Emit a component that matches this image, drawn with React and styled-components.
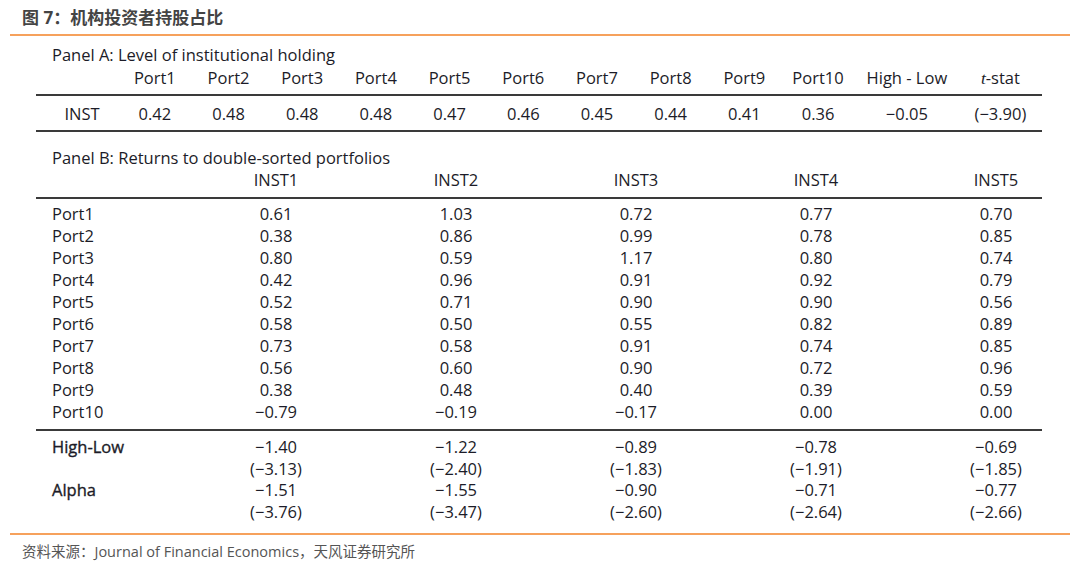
import React from 'react';
import styled, { createGlobalStyle } from 'styled-components';

const GlobalStyle = createGlobalStyle`
  body {
    margin: 0;
    background: #ffffff;
    font-family: "Open Sans", "Noto Sans CJK SC", sans-serif;
  }
`;

const ports = ['Port1', 'Port2', 'Port3', 'Port4', 'Port5', 'Port6', 'Port7', 'Port8', 'Port9', 'Port10'];
const instLevels = ['0.42', '0.48', '0.48', '0.48', '0.47', '0.46', '0.45', '0.44', '0.41', '0.36'];

const returns = [
  ['0.61', '1.03', '0.72', '0.77', '0.70'],
  ['0.38', '0.86', '0.99', '0.78', '0.85'],
  ['0.80', '0.59', '1.17', '0.80', '0.74'],
  ['0.42', '0.96', '0.91', '0.92', '0.79'],
  ['0.52', '0.71', '0.90', '0.90', '0.56'],
  ['0.58', '0.50', '0.55', '0.82', '0.89'],
  ['0.73', '0.58', '0.91', '0.74', '0.85'],
  ['0.56', '0.60', '0.90', '0.72', '0.96'],
  ['0.38', '0.48', '0.40', '0.39', '0.59'],
  ['−0.79', '−0.19', '−0.17', '0.00', '0.00'],
];

const summary = [
  { label: 'High-Low', values: ['−1.40', '−1.22', '−0.89', '−0.78', '−0.69'] },
  { label: '', values: ['(−3.13)', '(−2.40)', '(−1.83)', '(−1.91)', '(−1.85)'] },
  { label: 'Alpha', values: ['−1.51', '−1.55', '−0.90', '−0.71', '−0.77'] },
  { label: '', values: ['(−3.76)', '(−3.47)', '(−2.60)', '(−2.64)', '(−2.66)'] },
];

const Figure = styled.div`
  width: 1060px;
  margin: 0 10px;
`;

const Title = styled.div`
  height: 34px;
  line-height: 36px;
  padding-left: 12px;
  font-size: 17px;
  font-weight: 700;
  color: #444444;
  border-bottom: 2px solid #f6a15c;
`;

const Body = styled.div`
  border-bottom: 2px solid #f6a15c;
  padding-bottom: 10px;
`;

const Table = styled.div`
  width: 1006px;
  margin-left: 26px;
  color: #1c1c28;
  font-size: 16.5px;
`;

const Caption = styled.div`
  height: 22px;
  line-height: 22px;
  padding-left: 16px;
  margin-top: ${p => p.$top}px;
`;

const GridA = styled.div`
  display: grid;
  grid-template-columns: 82px repeat(10, 73.7px) 104px 1fr;
  align-items: center;
  height: ${p => p.$h}px;
  padding-bottom: ${p => p.$pb || 0}px;
  border-bottom: 2px solid #3a3a3a;
`;

const CellA = styled.div`
  text-align: center;
  white-space: nowrap;
  padding-left: ${p => (p.$label ? 10 : 0)}px;
`;

const Italic = styled.i`
  font-family: "Liberation Serif", serif;
  font-size: 17.5px;
`;

const HeadB = styled.div`
  display: grid;
  grid-template-columns: 150px repeat(5, 180px);
  height: 22px;
  line-height: 22px;
  padding-bottom: 6px;
  border-bottom: 2px solid #3a3a3a;
`;

const Section = styled.div`
  padding: ${p => p.$pt}px 0 ${p => p.$pb}px;
  border-bottom: ${p => (p.$rule ? '2px solid #3a3a3a' : 'none')};
`;

const RowB = styled.div`
  display: grid;
  grid-template-columns: 150px repeat(5, 180px);
  height: ${p => p.$h}px;
  line-height: ${p => p.$h}px;
`;

const Label = styled.div`
  padding-left: 16px;
  font-weight: ${p => (p.$strong ? 500 : 400)};
  -webkit-text-stroke: ${p => (p.$strong ? '0.35px' : '0')};
`;

const Value = styled.div`
  text-align: center;
  white-space: nowrap;
`;

const Source = styled.div`
  height: 20px;
  line-height: 20px;
  padding: 7px 0 0 12px;
  font-size: 14.5px;
  color: #555555;
`;

export default function App() {
  return (
    <>
      <GlobalStyle />
      <Figure>
        <Title>图 7：机构投资者持股占比</Title>
        <Body>
          <Table>
            <Caption $top={8}>Panel A: Level of institutional holding</Caption>
            <GridA $h={22} $pb={6}>
              <CellA $label />
              {ports.map(p => (
                <CellA key={p}>{p}</CellA>
              ))}
              <CellA>High - Low</CellA>
              <CellA>
                <Italic>t</Italic>-stat
              </CellA>
            </GridA>
            <GridA $h={34}>
              <CellA $label>INST</CellA>
              {instLevels.map((v, i) => (
                <CellA key={i}>{v}</CellA>
              ))}
              <CellA>−0.05</CellA>
              <CellA>(−3.90)</CellA>
            </GridA>

            <Caption $top={15}>Panel B: Returns to double-sorted portfolios</Caption>
            <HeadB>
              <div />
              {['INST1', 'INST2', 'INST3', 'INST4', 'INST5'].map(h => (
                <Value key={h}>{h}</Value>
              ))}
            </HeadB>
            <Section $pt={4} $pb={6} $rule>
              {returns.map((row, i) => (
                <RowB key={i} $h={22}>
                  <Label>{ports[i]}</Label>
                  {row.map((v, j) => (
                    <Value key={j}>{v}</Value>
                  ))}
                </RowB>
              ))}
            </Section>
            <Section $pt={5} $pb={0}>
              {summary.map((row, i) => (
                <RowB key={i} $h={21.7}>
                  <Label $strong>{row.label}</Label>
                  {row.values.map((v, j) => (
                    <Value key={j}>{v}</Value>
                  ))}
                </RowB>
              ))}
            </Section>
          </Table>
        </Body>
        <Source>资料来源：Journal of Financial Economics，天风证券研究所</Source>
      </Figure>
    </>
  );
}
